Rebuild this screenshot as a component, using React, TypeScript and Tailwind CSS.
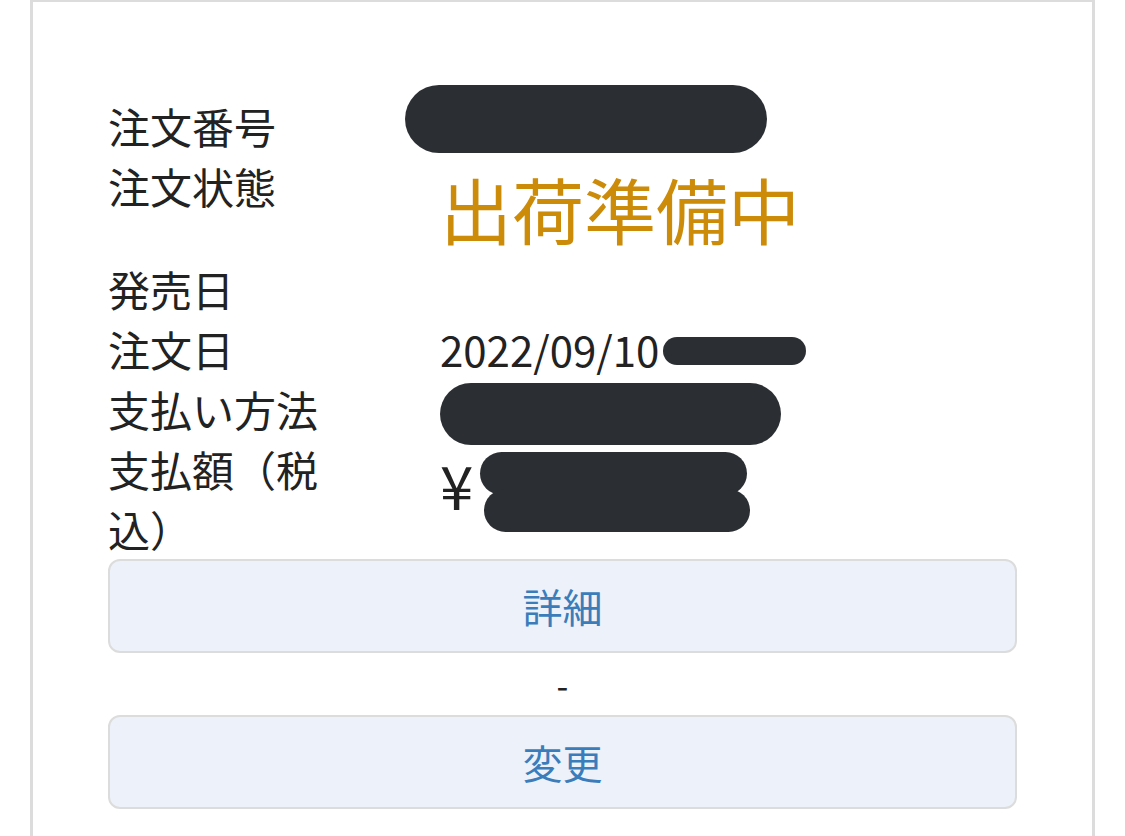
import React from "react";

const font = { fontFamily: '"Noto Sans CJK JP", "Noto Sans", sans-serif' };

// redaction marks drawn over the values
function Blob({ className }: { className: string }) {
  return <div className={"absolute rounded-full bg-[#2b2f33] " + className} />;
}

function Row({
  label,
  h,
  children,
}: {
  label: React.ReactNode;
  h: string;
  children?: React.ReactNode;
}) {
  return (
    <div className={"flex " + h}>
      <div className="w-[232px] mr-[100px] text-[42px] leading-[60px] text-[#222]">
        {label}
      </div>
      <div className="relative flex-1">{children}</div>
    </div>
  );
}

export default function App() {
  return (
    <div className="h-[836px] overflow-hidden bg-white px-[30px]" style={font}>
      <div className="h-[900px] border-x-[3px] border-t-2 border-[#dcdcdc] px-[75px] pt-[94px]">
        <Row label="注文番号" h="h-[60px]">
          <Blob className="left-[-35px] top-[-11px] w-[362px] h-[68px]" />
        </Row>
        <Row label="注文状態" h="h-[103px]">
          <div className="text-[72px] leading-[103px] text-[#cc8b08]">出荷準備中</div>
        </Row>
        <Row label="発売日" h="h-[60px]" />
        <Row label="注文日" h="h-[60px]">
          <div className="text-[42px] leading-[60px] text-[#222]">2022/09/10</div>
          <Blob className="left-[223px] top-[18px] w-[143px] h-[28px]" />
        </Row>
        <Row label="支払い方法" h="h-[60px]">
          <Blob className="left-0 top-[4px] w-[341px] h-[62px]" />
        </Row>
        <Row label="支払額（税込）" h="h-[120px]">
          <div className="text-[60px] leading-[90px] text-[#222]">¥</div>
          <Blob className="left-[40px] top-[13px] w-[267px] h-[43px]" />
          <Blob className="left-[44px] top-[50px] w-[266px] h-[43px]" />
        </Row>
        <button className="flex h-[94px] w-full items-center justify-center rounded-[12px] border-2 border-[#dcdcdc] bg-[#edf1f9] text-[40px] text-[#3b7dbb]">
          詳細
        </button>
        <div className="flex h-[62px] items-center justify-center text-[34px] text-[#222]">-</div>
        <button className="flex h-[94px] w-full items-center justify-center rounded-[12px] border-2 border-[#dcdcdc] bg-[#edf1f9] text-[40px] text-[#3b7dbb]">
          変更
        </button>
      </div>
    </div>
  );
}
